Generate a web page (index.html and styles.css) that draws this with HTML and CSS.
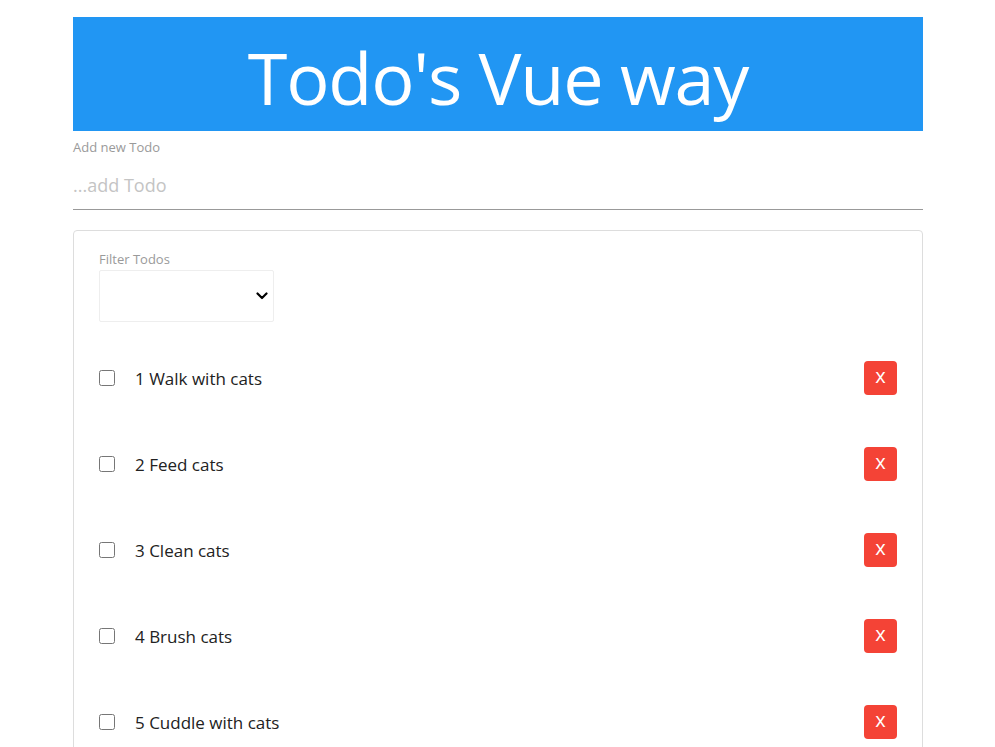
FILE: index.html
```html
<!DOCTYPE html>
<html>
<head>
<meta charset="utf-8">
<link rel="stylesheet" href="styles.css">
</head>
<body>
<div class="page">
  <header class="banner"><h1 class="title">Todo's Vue way</h1></header>
  <label class="field-label" for="newTodo">Add new Todo</label>
  <input id="newTodo" class="todo-input" type="text" placeholder="...add Todo">
  <section class="card">
    <label class="field-label filter-label" for="filter">Filter Todos</label>
    <div class="select-wrap">
      <select id="filter" class="filter-select"><option></option></select>
      <svg class="chevron" width="12" height="8" viewBox="0 0 12 8"><path d="M1.5 1.5 L6 6 L10.5 1.5" fill="none" stroke="#000" stroke-width="2.2" stroke-linecap="round" stroke-linejoin="round"/></svg>
    </div>
    <ul class="todo-list">
      <li class="todo-row"><input type="checkbox" class="todo-check"><span class="todo-text">1 Walk with cats</span><button class="del-btn">x</button></li>
      <li class="todo-row"><input type="checkbox" class="todo-check"><span class="todo-text">2 Feed cats</span><button class="del-btn">x</button></li>
      <li class="todo-row"><input type="checkbox" class="todo-check"><span class="todo-text">3 Clean cats</span><button class="del-btn">x</button></li>
      <li class="todo-row"><input type="checkbox" class="todo-check"><span class="todo-text">4 Brush cats</span><button class="del-btn">x</button></li>
      <li class="todo-row"><input type="checkbox" class="todo-check"><span class="todo-text">5 Cuddle with cats</span><button class="del-btn">x</button></li>
    </ul>
  </section>
</div>
</body>
</html>
```

FILE: styles.css
```css
html, body {
  margin: 0;
  padding: 0;
  background: #fff;
  font-family: "Open Sans", "Noto Sans", sans-serif;
  color: #222;
}
.page {
  width: 850px;
  margin: 17px 0 0 73px;
}
.banner {
  background: #2196F3;
  height: 114px;
  display: flex;
  align-items: center;
  justify-content: center;
}
.title {
  margin: 0;
  color: #fff;
  font-weight: 400;
  font-size: 72px;
  line-height: 1;
  letter-spacing: -1.2px;
  padding-top: 6px;
}
.field-label {
  display: block;
  font-size: 13px;
  line-height: 17px;
  color: #9a9a9a;
}
.banner + .field-label {
  margin-top: 8px;
}
.todo-input {
  display: block;
  box-sizing: border-box;
  width: 100%;
  border: none;
  border-bottom: 1px solid #999;
  padding: 17px 0 12px;
  font-family: inherit;
  font-size: 18px;
  line-height: 24px;
  outline: none;
}
.todo-input::placeholder {
  color: #c4c4c4;
}
.card {
  margin-top: 20px;
  border: 1px solid #ddd;
  border-radius: 4px;
  padding: 20px 25px 0 25px;
}
.filter-label {
  margin-bottom: 2px;
}
.select-wrap {
  position: relative;
  width: 175px;
}
.filter-select {
  display: block;
  width: 175px;
  height: 52px;
  border: 1px solid #eee;
  border-radius: 2px;
  background: #fff;
  font-family: inherit;
  appearance: none;
  -webkit-appearance: none;
}
.chevron {
  position: absolute;
  left: 157px;
  top: 22px;
  pointer-events: none;
}
.todo-list {
  list-style: none;
  margin: 13px 0 0 0;
  padding: 0;
}
.todo-row {
  height: 86px;
  display: flex;
  align-items: center;
}
.todo-check {
  width: 16px;
  height: 16px;
  margin: 0 20px 0 0;
}
.todo-text {
  flex: 1;
  font-size: 17px;
  color: #222;
}
.del-btn {
  width: 33px;
  height: 34px;
  border: none;
  border-radius: 4px;
  background: #f44336;
  color: #fff;
  font-family: inherit;
  font-size: 20px;
  line-height: 1;
  padding: 0 0 4px;
}
```
